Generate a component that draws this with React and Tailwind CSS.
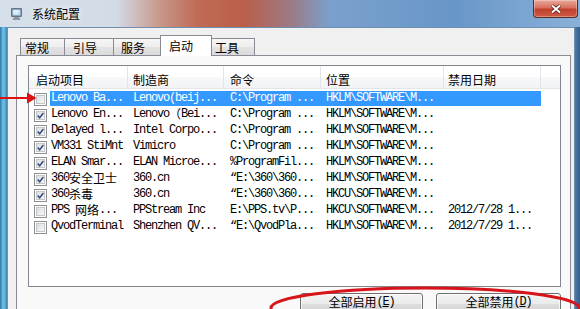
import React from 'react';

const cjkRun = /([\u2e80-\u9fff\u3000-\u303f\uff00-\uffef]+)/;

const mono = "font-['Liberation_Mono',monospace] text-[12px] tracking-[-1.2px]";

// SimSun-like mix: ascii 6px wide, cjk 12px wide
function Mixed({ text }) {
  return text.split(cjkRun).map((part, i) =>
    i % 2 === 1 ? (
      <span key={i} className="font-['Noto_Sans_CJK_SC',sans-serif] text-[12px] leading-[14px] tracking-normal align-top">
        {part}
      </span>
    ) : (
      <span key={i} className="whitespace-pre">{part}</span>
    )
  );
}

const columns = [
  { label: '启动项目', w: 'w-[99px]', pl: 'pl-[7px]' },
  { label: '制造商', w: 'w-[96px]', pl: 'pl-[5px]' },
  { label: '命令', w: 'w-[97px]', pl: 'pl-[6px]' },
  { label: '位置', w: 'w-[123px]', pl: 'pl-[5px]' },
  { label: '禁用日期', w: 'w-[97px]', pl: 'pl-[4px]' },
];

const rows = [
  { on: false, sel: true, c: ['Lenovo Ba...', 'Lenovo(beij...', 'C:\\Program ...', 'HKLM\\SOFTWARE\\M...', ''] },
  { on: true, c: ['Lenovo En...', 'Lenovo（Bei...', 'C:\\Program ...', 'HKLM\\SOFTWARE\\M...', ''] },
  { on: true, c: ['Delayed l...', 'Intel Corpo...', 'C:\\Program ...', 'HKLM\\SOFTWARE\\M...', ''] },
  { on: true, c: ['VM331 StiMnt', 'Vimicro', 'C:\\Program ...', 'HKLM\\SOFTWARE\\M...', ''] },
  { on: true, c: ['ELAN Smar...', 'ELAN Microe...', '%ProgramFil...', 'HKLM\\SOFTWARE\\M...', ''] },
  { on: true, c: ['360安全卫士', '360.cn', '“E:\\360\\360...', 'HKLM\\SOFTWARE\\M...', ''] },
  { on: true, c: ['360杀毒', '360.cn', '“E:\\360\\360...', 'HKCU\\SOFTWARE\\M...', ''] },
  { on: false, c: ['PPS 网络...', 'PPStream Inc', 'E:\\PPS.tv\\P...', 'HKCU\\SOFTWARE\\M...', '2012/7/28 1...'] },
  { on: false, c: ['QvodTerminal', 'Shenzhen QV...', '“E:\\QvodPla...', 'HKLM\\SOFTWARE\\M...', '2012/7/29 1...'] },
];

const tabs = [
  { label: '常规', cls: 'w-[44px] pl-[4px] border-l' },
  { label: '引导', cls: 'w-[49px] pl-[8px] border-l' },
  { label: '服务', cls: 'w-[47px] pl-[7px] border-l' },
  { label: '启动', cls: 'w-[52px] pl-[8px] border-l border-r', active: true },
  { label: '工具', cls: 'w-[43px] pl-[3px] border-r' },
];

function Checkbox({ on }) {
  return (
    <div className="w-[13px] h-[13px] border border-[#8e8f8f] bg-white p-px">
      <div className="w-full h-full border border-[#c4c6c8] bg-[linear-gradient(135deg,#dcdfe2,#f6f7f8)] flex items-center justify-center">
        {on && (
          <svg width="11" height="11" viewBox="0 0 11 11" className="-m-px">
            <path d="M2 5.5 L4.5 8.3 L9 2.5" fill="none" stroke="#35497a" strokeWidth="1.8" />
          </svg>
        )}
      </div>
    </div>
  );
}

function TitleBar() {
  // aero glass, with the red of the window behind showing through the middle
  return (
    <div className="h-[27px] shrink-0 flex items-start bg-[linear-gradient(to_right,#d6e0ea,#d2dce7_20%,#c99c90_27%,#bf6b55_34%,#ba5f4a_42%,#9c7a84_50%,#7aa1cc_57%,#6896c8_78%,#8ab1d9)]">
      <div className="h-[27px] flex items-center pl-[10px]">
        <svg width="14" height="14" viewBox="0 0 14 14">
          <rect x="1" y="1" width="11" height="9" rx="1" fill="#66768a" />
          <rect x="2.5" y="2.5" width="8" height="6" fill="#b9dcf6" />
          <path d="M3.5 4 H9 M3.5 6 H8" stroke="#ffffff" strokeWidth="1" />
          <path d="M4 10 H9 L10.5 13 H2.5 Z" fill="#8b97a6" />
        </svg>
        <span className="ml-[8px] text-[12px] leading-[16px] text-black [text-shadow:0_0_6px_#ffffff]">系统配置</span>
      </div>
      <div className="flex-1" />
      <div className="w-[45px] h-[18px] mr-[2px] rounded-b-[4px] border border-t-0 border-[#5a2d27] bg-[linear-gradient(to_bottom,#eaa99b,#d8705e_45%,#c0402c_55%,#cf5a43)] shadow-[inset_0_0_0_1px_rgba(255,255,255,0.3)] flex items-center justify-center">
        <svg width="12" height="10" viewBox="0 0 12 10">
          <path d="M2 1.5 L10 8.5 M10 1.5 L2 8.5" stroke="#4a1a12" strokeWidth="3.6" />
          <path d="M2 1.5 L10 8.5 M10 1.5 L2 8.5" stroke="#ffffff" strokeWidth="2" />
        </svg>
      </div>
    </div>
  );
}

function StartupList() {
  return (
    <div className="w-[533px] h-[222px] border border-[#828790] bg-white flex flex-col">
      <div className="flex h-[23px] shrink-0 border-b border-[#e5e5e5] bg-[linear-gradient(to_bottom,#ffffff,#ffffff_50%,#f7f8fa_50%,#f2f3f5)]">
        {columns.map((col) => (
          <div
            key={col.label}
            className={`${col.w} ${col.pl} h-full border-r border-[#e1e4e8] pt-[6px] leading-[16px] text-[12px]`}
          >
            {col.label}
          </div>
        ))}
        <div className="flex-1" />
      </div>
      <div className="pt-[2px]">
        {rows.map((row, r) => {
          const sel = row.sel ? 'bg-[#3399ff] text-white' : 'text-black';
          return (
            <div key={r} className="flex h-[16px]">
              <div className="w-[99px] flex">
                <div className="w-[21px] pl-[5px] pt-[2px]">
                  <Checkbox on={row.on} />
                </div>
                <div className={`w-[78px] h-[15px] pl-[1px] leading-[15px] whitespace-nowrap ${mono} ${sel}`}>
                  <Mixed text={row.c[0]} />
                </div>
              </div>
              {row.c.slice(1).map((cell, i) => (
                <div
                  key={i}
                  className={`${columns[i + 1].w} ${columns[i + 1].pl} h-[15px] leading-[15px] whitespace-nowrap ${mono} ${sel}`}
                >
                  <Mixed text={cell} />
                </div>
              ))}
            </div>
          );
        })}
      </div>
    </div>
  );
}

function WinButton({ label, hotkey, w }) {
  return (
    <div className={`${w} h-[23px] shrink-0 rounded-[3px] border border-[#707070] bg-[linear-gradient(to_bottom,#f4f4f4,#ebebeb_45%,#dddddd_50%,#cfcfcf)] shadow-[inset_0_0_0_1px_rgba(255,255,255,0.7)] pt-[2px] leading-[12px] text-center text-[12px]`}>
      <span className="align-top">{label}</span>
      <span className={`${mono} align-top`}>
        (<span className="underline">{hotkey}</span>)
      </span>
    </div>
  );
}

export default function App() {
  return (
    <div className="relative w-[580px] h-[309px] overflow-hidden flex flex-col bg-[#5d94c2] font-['Noto_Sans_CJK_SC',sans-serif] text-[12px] text-black">
      <TitleBar />
      <div className="flex flex-1 min-h-0">
        <div className="w-[7px] shrink-0 bg-[linear-gradient(to_right,#2a77a2,#6ec3ea_45%,#57a3cf_80%,#3b7fae)]" />
        <div className="w-[568px] shrink-0 border-l border-t border-r border-[#6f8fb0] bg-[#f0f0f0] pl-[8px] pt-[7px]">
          {/* tabs */}
          <div className="relative z-10 flex items-end h-[20px] ml-[4px]">
            {tabs.map((t) =>
              t.active ? (
                <div key={t.label} className={`${t.cls} h-[21px] -mb-px border-t border-[#898c95] bg-white pt-[2px] leading-[16px]`}>
                  {t.label}
                </div>
              ) : (
                <div
                  key={t.label}
                  className={`${t.cls} h-[17px] border-t border-[#898c95] bg-[linear-gradient(to_bottom,#f6f6f6,#ededed_50%,#e3e3e3_50%,#dbdbdb)] pt-px leading-[16px]`}
                >
                  {t.label}
                </div>
              )
            )}
          </div>
          {/* panel */}
          <div className="w-[555px] h-[270px] border border-[#898c95] bg-[#f9f9f9] pl-[11px] pt-[9px]">
            <StartupList />
            <div className="w-[533px] flex justify-end gap-[13px] mt-[6px]">
              <WinButton label="全部启用" hotkey="E" w="w-[123px]" />
              <WinButton label="全部禁用" hotkey="D" w="w-[125px]" />
            </div>
          </div>
        </div>
        <div className="flex-1 bg-[linear-gradient(to_right,#4c7aa6,#335f8c)]" />
      </div>

      {/* red annotations drawn over the screenshot */}
      <svg className="absolute inset-0 pointer-events-none" width="580" height="309" viewBox="0 0 580 309">
        <line x1="0" y1="98" x2="29" y2="98" stroke="#e01010" strokeWidth="2" />
        <polygon points="27,92.5 36.5,98 27,103.5" fill="#e01010" />
        <ellipse cx="425" cy="308" rx="154" ry="20" fill="none" stroke="#d8141b" strokeWidth="3" />
      </svg>
    </div>
  );
}
